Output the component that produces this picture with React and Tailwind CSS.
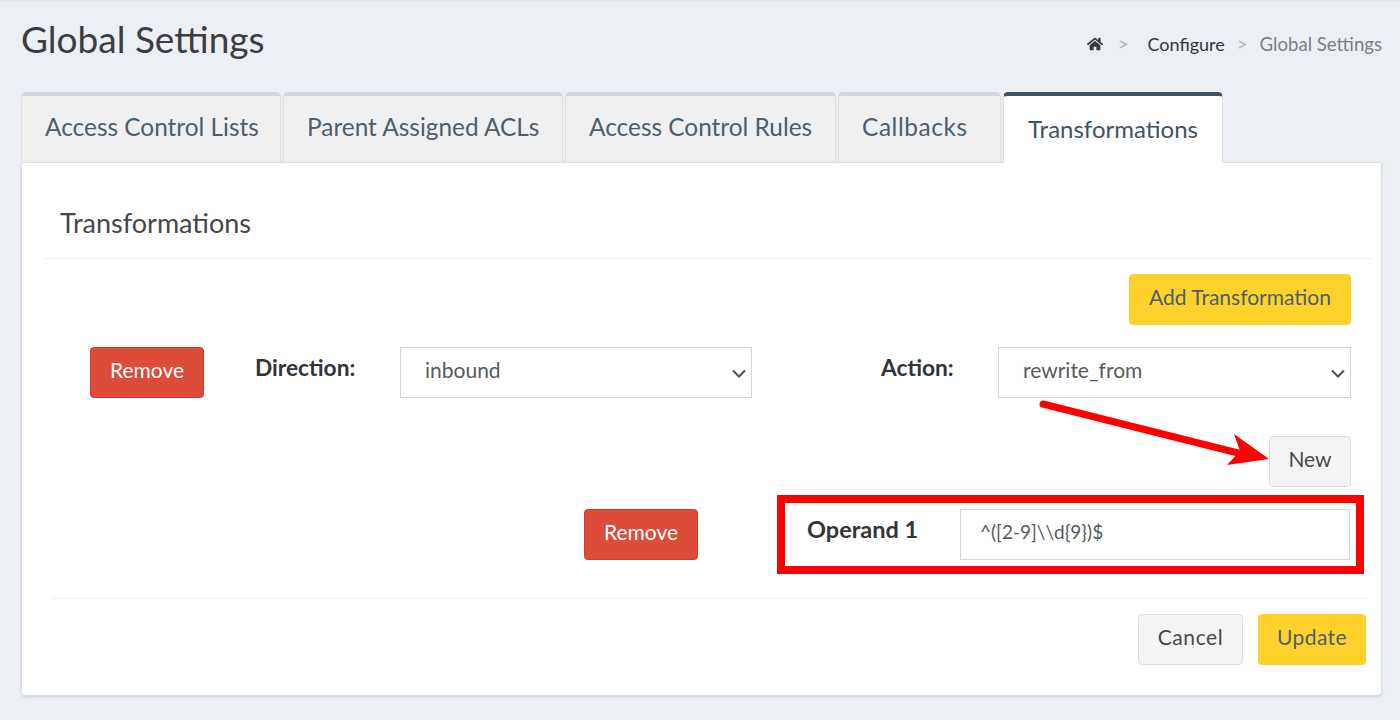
import { FaHome } from "react-icons/fa";

const tabs = [
  ["Access Control Lists", "w-[260px]"],
  ["Parent Assigned ACLs", "w-[280px]"],
  ["Access Control Rules", "w-[271px]"],
  ["Callbacks", "w-[163px] tracking-[0.6px]"],
];

function Btn({ className, children }) {
  return (
    <button className={`h-[51px] rounded-[4px] border text-[21px] leading-none pb-[6px] ${className}`}>
      {children}
    </button>
  );
}

function Select({ value, className }) {
  return (
    <div className={`relative h-[51px] border border-[#d2d6de] bg-white flex items-center pl-[24px] pb-[5px] text-[21px] text-[#555b61] ${className}`}>
      <span>{value}</span>
      <svg className="absolute right-[5px] top-[19px]" width="14" height="14" viewBox="0 0 14 14" fill="none" stroke="#4b5157" strokeWidth="2">
        <path d="M1 3.5 L7 9.5 L13 3.5" />
      </svg>
    </div>
  );
}

export default function App() {
  return (
    <div className="relative min-h-[720px] bg-[#eceff4] border-t-2 border-[#e2e5ea] font-['Lato','Noto_Sans',sans-serif] overflow-hidden">
      <div className="flex justify-between pl-[21px] pr-[18px] h-[90px]">
        <h1 className="text-[37px] leading-none mt-[18px] text-[#3b3d40]">Global Settings</h1>
        <div className="flex items-center h-[20px] mt-[32px] text-[18.6px] leading-none">
          <FaHome className="text-[#3b3d40] text-[16px] mr-[15px]" />
          <span className="text-[#b4b8be] mr-[19px]">&gt;</span>
          <span className="text-[#33373c] mr-[12px] text-[18px]">Configure</span>
          <span className="text-[#b4b8be] mr-[12px]">&gt;</span>
          <span className="text-[#7c7f83]">Global Settings</span>
        </div>
      </div>

      <div className="ml-[21px] flex items-end h-[70px] gap-[2px]">
        {tabs.map(([t, w]) => (
          <div key={t} className={`${w} h-[70px] bg-[#f0f0f0] border-t-4 border-x border-t-[#d2d6e0] border-x-[#dcdee2] rounded-t-[5px] flex items-center pl-[23px] text-[24.4px] leading-none text-[#4d5e6e] pb-[4px]`}>
            {t}
          </div>
        ))}
        <div className="relative z-10 w-[220px] h-[71px] -mb-px bg-white border-t-4 border-x border-t-[#3f5364] border-x-[#dcdee2] rounded-t-[5px] flex items-center justify-center text-[24px] leading-none text-[#3f5364] pb-[1px]">
          Transformations
        </div>
      </div>

      <div className="relative ml-[21px] w-[1361px] h-[534px] bg-white border border-[#dcdfe4] rounded-b-[4px] shadow-sm">
        <div className="ml-[22px] mr-[9px] h-[96px] border-b border-[#eef0f2] pl-[16px] pt-[46px] text-[27px] leading-none text-[#44474a]">
          Transformations
        </div>

        <div className="flex justify-end mt-[15px] pr-[30px]">
          <Btn className="w-[222px] bg-[#ffd22b] border-[#ffd22b] text-[#4d5e6e]">Add Transformation</Btn>
        </div>

        <div className="flex items-start mt-[22px] pl-[68px]">
          <Btn className="w-[114px] bg-[#dd4b39] border-[#d73925] text-white">Remove</Btn>
          <span className="ml-[51px] mt-[10px] w-[145px] text-[22.7px] font-bold leading-none text-[#333537]">Direction:</span>
          <Select value="inbound" className="w-[352px]" />
          <span className="ml-[129px] mt-[10px] w-[117px] text-[22.7px] font-bold leading-none text-[#333537]">Action:</span>
          <Select value="rewrite_from" className="w-[353px]" />
        </div>

        <div className="flex justify-end mt-[38px] pr-[30px]">
          <Btn className="w-[82px] bg-[#f4f4f4] border-[#dddddd] text-[#444a50]">New</Btn>
        </div>

        <div className="flex items-center mt-[8px]">
          <Btn className="ml-[562px] w-[114px] bg-[#dd4b39] border-[#d73925] text-white">Remove</Btn>
          <div className="ml-[79px] w-[587px] h-[79px] border-[8px] border-[#ff0000] flex items-start">
            <span className="ml-[22px] mt-[15px] w-[153px] text-[23.5px] font-bold leading-none text-[#333537]">Operand 1</span>
            <div className="w-[390px] h-[51px] mt-[6px] border border-[#d2d6de] flex items-center pl-[19px] pb-[4px] text-[19px] text-[#555b61]">
              {"^([2-9]\\\\d{9})$"}
            </div>
          </div>
        </div>

        <div className="ml-[30px] mr-[15px] mt-[24px] border-t border-[#eef0f2]" />

        <div className="flex justify-end gap-[15px] mt-[15px] pr-[15px]">
          <Btn className="w-[105px] bg-[#f4f4f4] border-[#dddddd] text-[#444a50] tracking-[0.6px]">Cancel</Btn>
          <Btn className="w-[108px] bg-[#ffd22b] border-[#ffd22b] text-[#4d5e6e] tracking-[0.4px]">Update</Btn>
        </div>
      </div>

      <svg className="absolute left-[1037px] top-[397px] pointer-events-none" width="240" height="72" viewBox="0 0 240 72" fill="none">
        <path d="M6 5 L205 55" stroke="#ff0000" strokeWidth="7" strokeLinecap="round" />
        <path d="M197 35 L232 60 L190 66 L203 52 Z" fill="#ff0000" />
      </svg>
    </div>
  );
}
